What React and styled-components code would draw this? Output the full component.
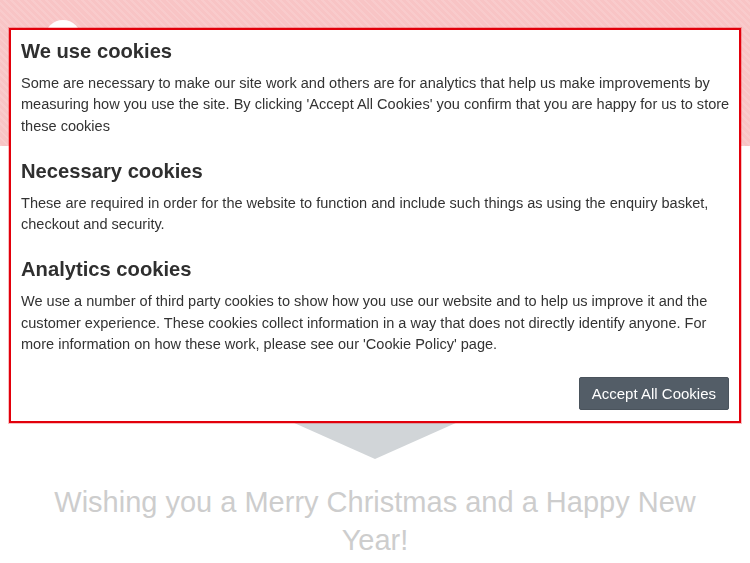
import React from 'react';
import styled, { createGlobalStyle } from 'styled-components';

const Global = createGlobalStyle`
	html, body {
		margin: 0;
		padding: 0;
		background: #fff;
		font-family: 'Liberation Sans', Arial, sans-serif;
	}
`;

const Page = styled.div`
	width: 750px;
	min-height: 563px;
	overflow: hidden;
`;

// pink hatched banner behind the modal
const Hero = styled.header`
	height: 146px;
	padding: 20px 0 0 45px;
	box-sizing: border-box;
	background-color: #f8c4c5;
	background-image: repeating-linear-gradient(
		45deg,
		rgba(255, 255, 255, 0.12) 0,
		rgba(255, 255, 255, 0.12) 2px,
		transparent 2px,
		transparent 5px
	);
`;

const Logo = styled.div`
	width: 36px;
	height: 36px;
	border-radius: 50%;
	background: #fff;
`;

const Section = styled.section`
	height: 276px;
`;

const Arrow = styled.div`
	width: 0;
	height: 0;
	margin: 0 auto;
	border-left: 83px solid transparent;
	border-right: 83px solid transparent;
	border-top: 37px solid #d1d5d8;
`;

const Greeting = styled.h2`
	margin: 24px auto 0;
	width: 660px;
	text-align: center;
	font-weight: 400;
	font-size: 29px;
	line-height: 38px;
	color: #cdcdcd;
`;

const Modal = styled.div`
	position: fixed;
	z-index: 100;
	top: 28px;
	left: 9px;
	width: 732px;
	box-sizing: border-box;
	padding: 10px 8px 11px 10px;
	background: #fff;
	border: 2px solid #e2000b;
	box-shadow: 0 0 0 1px rgba(230, 0, 10, 0.25);
	color: #333;
`;

const Title = styled.h3`
	margin: 0 0 11px;
	font-size: 20.2px;
	line-height: 22px;
	font-weight: 700;
	color: #2f2f2f;
`;

const Text = styled.p`
	margin: 0 0 ${(p) => (p.last ? '22px' : '23px')};
	font-size: 14.55px;
	line-height: 21.3px;
	color: #333;
`;

const Actions = styled.div`
	display: flex;
	justify-content: flex-end;
	padding-right: 2px;
`;

const Button = styled.button`
	height: 33px;
	padding: 0 12px;
	border: 1px solid #4a535c;
	border-radius: 2px;
	background: #535d67;
	color: #fff;
	font-family: 'Liberation Sans', Arial, sans-serif;
	font-size: 15px;
	cursor: pointer;
`;

const App = () => (
	<Page>
		<Global />
		<Hero>
			<Logo />
		</Hero>
		<Section />
		<Arrow />
		<Greeting>Wishing you a Merry Christmas and a Happy New Year!</Greeting>

		<Modal>
			<Title>We use cookies</Title>
			<Text>
				Some are necessary to make our site work and others are for analytics that help us make
				improvements by measuring how you use the site. By clicking 'Accept All Cookies' you
				confirm that you are happy for us to store these cookies
			</Text>
			<Title>Necessary cookies</Title>
			<Text>
				These are required in order for the website to function and include such things as using
				the enquiry basket, checkout and security.
			</Text>
			<Title>Analytics cookies</Title>
			<Text last>
				We use a number of third party cookies to show how you use our website and to help us
				improve it and the customer experience. These cookies collect information in a way that
				does not directly identify anyone. For more information on how these work, please see our
				'Cookie Policy' page.
			</Text>
			<Actions>
				<Button>Accept All Cookies</Button>
			</Actions>
		</Modal>
	</Page>
);

export default App;
